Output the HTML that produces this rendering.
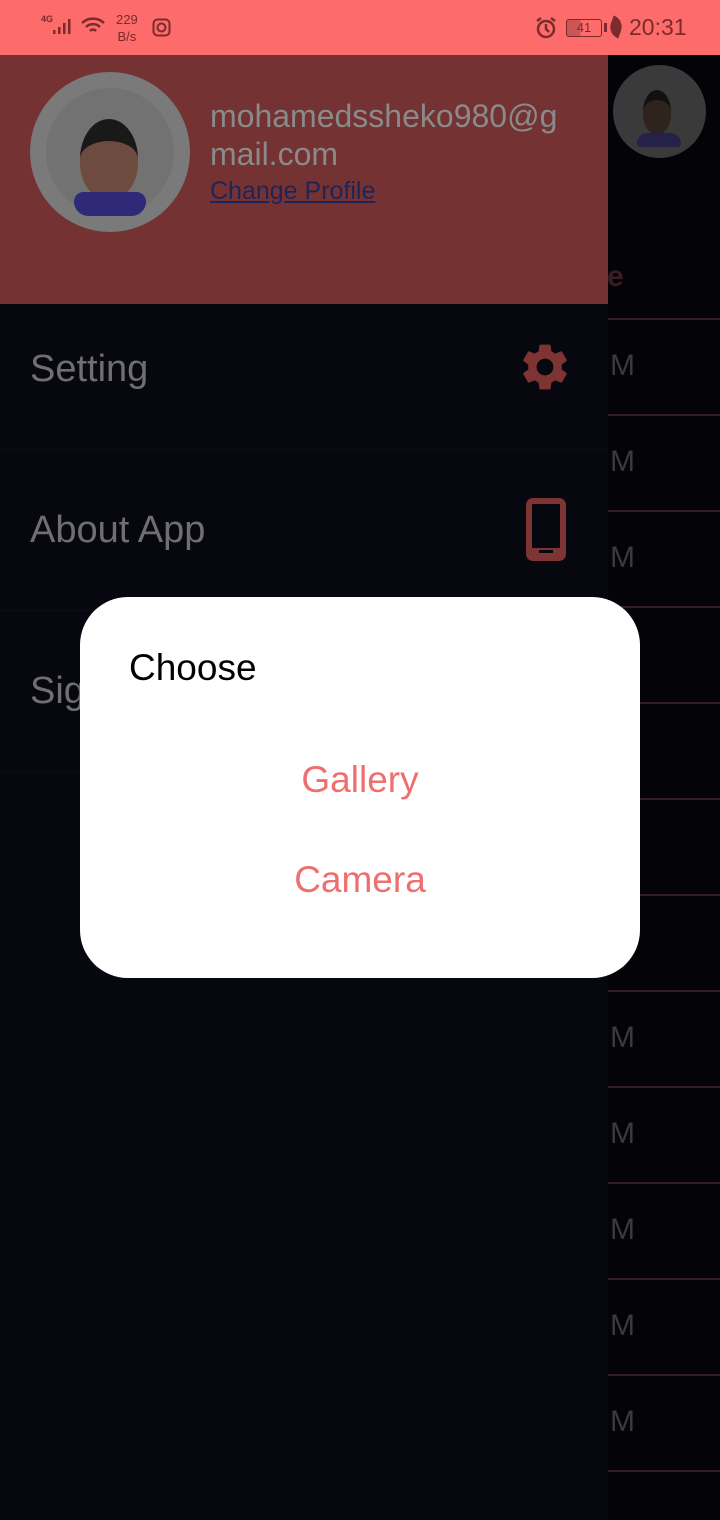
<!DOCTYPE html>
<html><head><meta charset="utf-8"><style>
*{margin:0;padding:0;box-sizing:border-box}
body{width:720px;height:1520px;overflow:hidden;background:#030308;font-family:"Liberation Sans",Roboto,sans-serif;position:relative}
.sb{position:absolute;left:0;top:0;width:720px;height:55px;background:#fe6b6b;color:#7a2b2b}
.right .row{position:absolute;left:608px;width:112px;height:96px;border-bottom:2px solid #3a1a22}
.right .m{position:absolute;left:610px;font-size:30px;color:#3a3a3e}
.drawer{position:absolute;left:0;top:55px;width:608px;height:1465px;background:#06070f}
.hdr{position:absolute;left:0;top:0;width:608px;height:249px;background:#743233}
.item{position:absolute;left:0;width:608px;color:#6f6f73;font-size:38px;padding-left:30px;border-bottom:1px solid #0d0d14}
.dlg{position:absolute;left:80px;top:597px;width:560px;height:381px;background:#fff;border-radius:48px}
</style></head><body>
<div class="sb">
 <div style="position:absolute;left:41px;top:14px;font-size:9px;font-weight:bold">4G</div>
 <svg style="position:absolute;left:52px;top:17px" width="20" height="20"><rect x="1" y="13" width="2.5" height="4" fill="#7a2b2b"/><rect x="6" y="10" width="2.5" height="7" fill="#7a2b2b"/><rect x="11" y="6" width="2.5" height="11" fill="#7a2b2b"/><rect x="16" y="2" width="2.5" height="15" fill="#7a2b2b"/></svg>
 <svg style="position:absolute;left:80px;top:15px" width="26" height="22" fill="none" stroke="#7a2b2b" stroke-width="2.5"><path d="M2 8a16 16 0 0 1 22 0M6 12a10 10 0 0 1 14 0M10 16a4 4 0 0 1 6 0"/></svg>
 <div style="position:absolute;left:116px;top:11px;font-size:13px;line-height:17px;text-align:center">229<br>B/s</div>
 <svg style="position:absolute;left:152px;top:18px" width="20" height="20" fill="none" stroke="#7a2b2b" stroke-width="2"><rect x="1.5" y="1.5" width="16" height="16" rx="4"/><circle cx="9.5" cy="9.5" r="4"/></svg>
 <svg style="position:absolute;left:534px;top:16px" width="24" height="24" fill="none" stroke="#7a2b2b" stroke-width="2.5"><circle cx="12" cy="13" r="8"/><path d="M12 8v5l3 3M3 5l4-3M21 5l-4-3"/></svg>
 <div style="position:absolute;left:566px;top:19px;width:36px;height:18px;border:1.5px solid #7a2b2b;border-radius:3px;font-size:13px;text-align:center;line-height:15px;background:linear-gradient(90deg,#c55 40%,transparent 40%)">41</div>
 <div style="position:absolute;left:604px;top:23px;width:3px;height:9px;background:#7a2b2b"></div>
 <div style="position:absolute;left:610px;top:17px;width:12px;height:20px;background:#7a2b2b;border-radius:0 12px 0 12px;transform:rotate(20deg)"></div>
 <div style="position:absolute;left:629px;top:14px;font-size:23px">20:31</div>
</div>
<div class="right">
 <div style="position:absolute;left:613px;top:65px;width:93px;height:93px;border-radius:50%;background:#3a3a3a"></div>
 <div style="position:absolute;left:643px;top:90px;width:28px;height:44px;border-radius:50% 50% 45% 45%;background:#2f231e;border-top:10px solid #111"></div>
 <div style="position:absolute;left:637px;top:133px;width:44px;height:14px;border-radius:12px 12px 4px 4px;background:#25224a"></div>
 <div class="row" style="top:224px"></div>
 <div class="row" style="top:320px"></div><div class="m" style="top:349px">M</div>
 <div class="row" style="top:416px"></div><div class="m" style="top:445px">M</div>
 <div class="row" style="top:512px"></div><div class="m" style="top:541px">M</div>
 <div class="row" style="top:608px"></div>
 <div class="row" style="top:704px"></div>
 <div class="row" style="top:800px"></div>
 <div class="row" style="top:896px"></div><div class="m" style="top:1021px">M</div>
 <div class="row" style="top:992px"></div><div class="m" style="top:1117px">M</div>
 <div class="row" style="top:1088px"></div><div class="m" style="top:1213px">M</div>
 <div class="row" style="top:1184px"></div><div class="m" style="top:1309px">M</div>
 <div class="row" style="top:1280px"></div><div class="m" style="top:1405px">M</div>
 <div class="row" style="top:1376px"></div>
</div>
<div class="drawer">
 <div class="hdr">
  <div style="position:absolute;left:30px;top:17px;width:160px;height:160px;border-radius:50%;background:#7a7a7a"></div>
  <div style="position:absolute;left:46px;top:33px;width:128px;height:128px;border-radius:50%;background:#727272"></div>
  <div style="position:absolute;left:80px;top:64px;width:58px;height:80px;border-radius:50% 50% 45% 45%;background:#6e4b3f;border-top:22px solid #191919"></div>
  <div style="position:absolute;left:74px;top:137px;width:72px;height:24px;border-radius:20px 20px 30px 30px;background:#2f2a78"></div>
  <div style="position:absolute;left:210px;top:42px;font-size:32px;line-height:38px;color:#8a8a8a">mohamedssheko980@g<br>mail.com</div>
  <div style="position:absolute;left:210px;top:122px;font-size:25px;color:#1f2458;text-decoration:underline">Change Profile</div>
 </div>
 <div class="item" style="top:249px;height:146px;line-height:130px">Setting</div>
 <svg style="position:absolute;left:517px;top:284px" width="56" height="56" viewBox="0 0 24 24"><path fill="#7f3434" d="M19.14 12.94c.04-.3.06-.61.06-.94s-.02-.64-.07-.94l2.03-1.58a.49.49 0 0 0 .12-.61l-1.920-3.32a.49.49 0 0 0-.59-.22l-2.39.96c-.5-.38-1.03-.7-1.62-.94l-.36-2.54A.48.48 0 0 0 13.92 2.4h-3.84c-.24 0-.43.17-.47.41l-.36 2.54c-.59.24-1.13.57-1.62.94l-2.39-.96a.48.48 0 0 0-.59.22L2.74 8.87a.47.47 0 0 0 .12.61l2.03 1.58c-.05.3-.09.63-.09.94s.02.64.07.94l-2.03 1.580a.49.49 0 0 0-.12.61l1.92 3.32c.12.22.37.29.59.22l2.39-.96c.5.38 1.03.7 1.62.94l.36 2.54c.05.24.24.41.48.41h3.84c.24 0 .44-.17.47-.41l.36-2.54c.59-.24 1.13-.56 1.62-.94l2.39.96c.22.08.47 0 .59-.22l1.92-3.32a.47.47 0 0 0-.12-.61l-2.01-1.58zM12 15.6A3.6 3.6 0 1 1 12 8.4a3.6 3.6 0 0 1 0 7.2z"/></svg>
 <div class="item" style="top:395px;height:161px;line-height:160px">About App</div>
 <div style="position:absolute;left:526px;top:443px;width:40px;height:63px;border:6px solid #7f3434;border-bottom-width:13px;border-radius:7px"></div>
 <div style="position:absolute;left:539px;top:495px;width:14px;height:3px;background:#06070f"></div>
 <div class="item" style="top:556px;height:161px;line-height:160px">Sign Out</div>
</div>
<div style="position:absolute;left:607px;top:260px;font-size:30px;font-weight:bold;color:#3a1c22">e</div>
<div class="dlg">
 <div style="position:absolute;left:49px;top:50px;font-size:37px;color:#000">Choose</div>
 <div style="position:absolute;left:0;width:560px;top:162px;text-align:center;font-size:37px;color:#ef6e6e">Gallery</div>
 <div style="position:absolute;left:0;width:560px;top:262px;text-align:center;font-size:37px;color:#ef6e6e">Camera</div>
</div>
</body></html>
